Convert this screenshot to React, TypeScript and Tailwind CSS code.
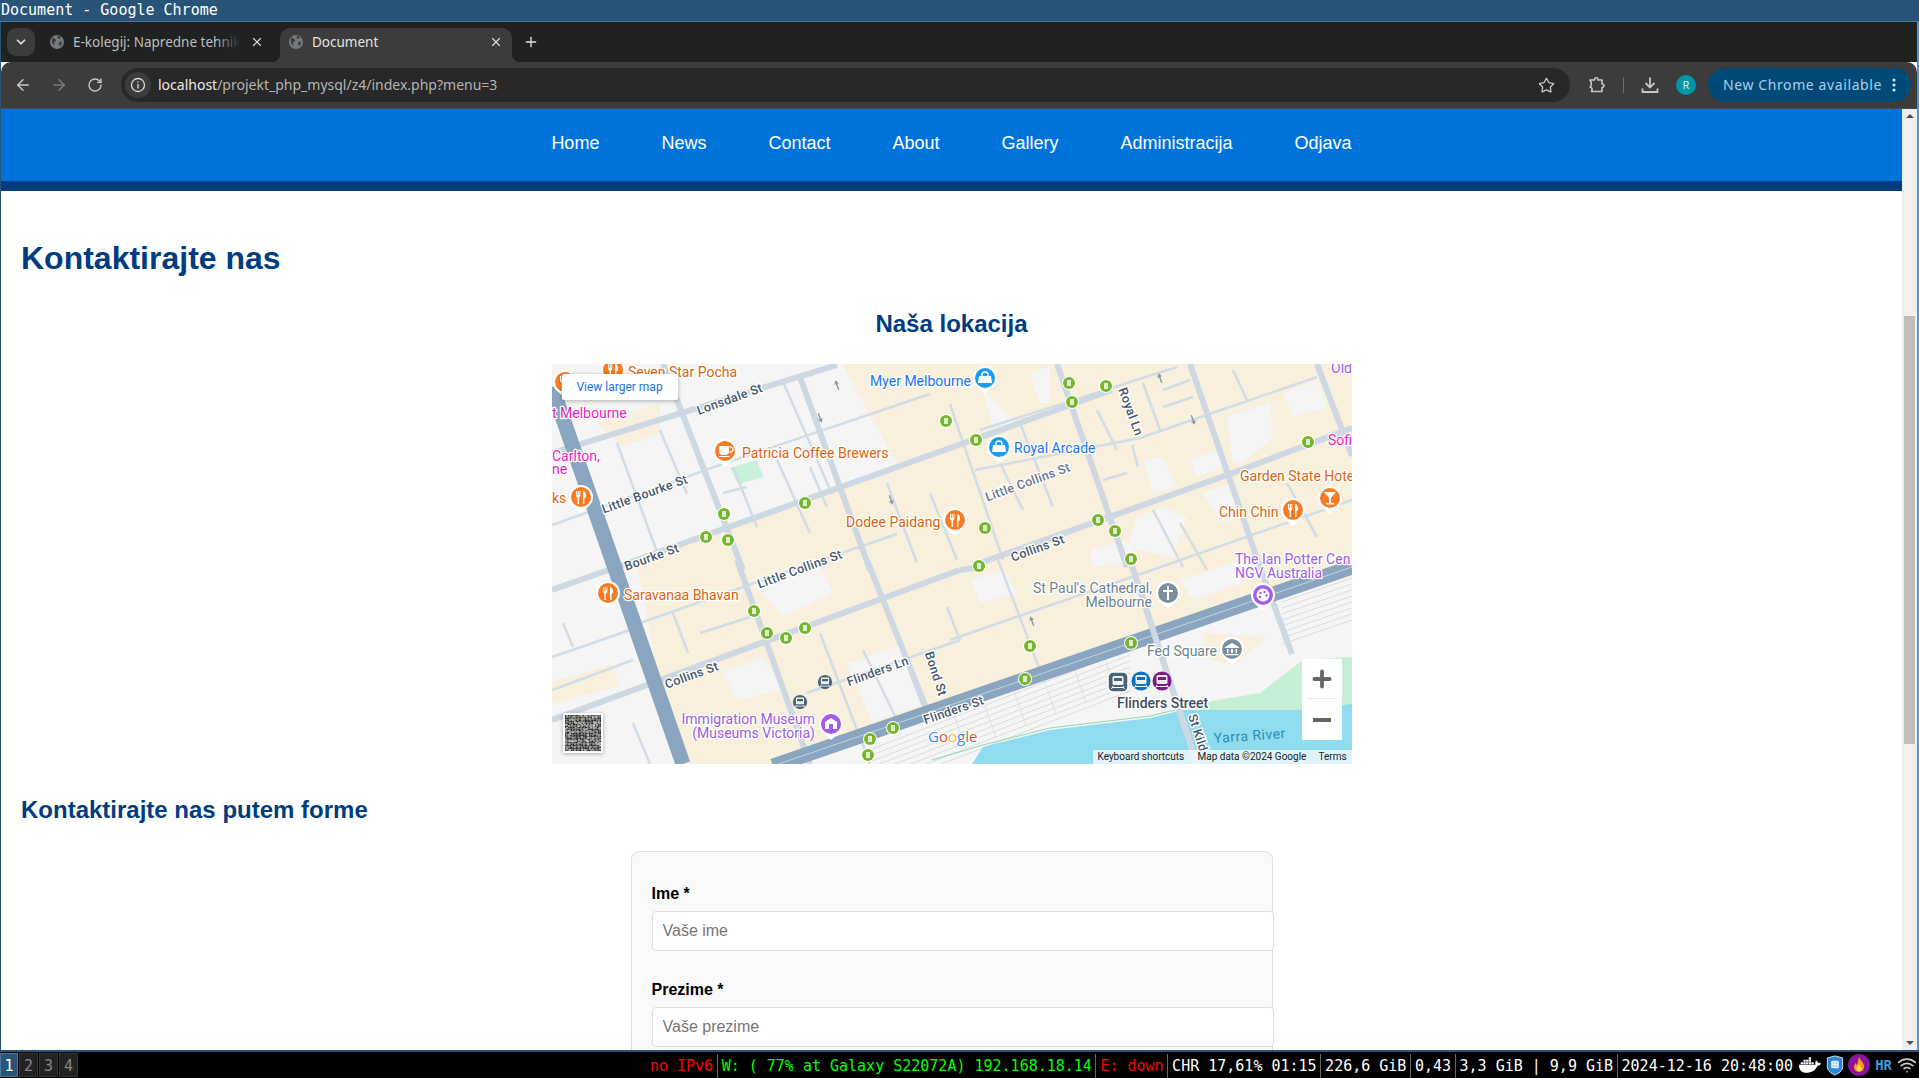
import React from "react";
import { ArrowLeft, ArrowRight, ChevronDown, Plus, RotateCw, Star, Wifi, X } from "lucide-react";
import { FaDocker } from "react-icons/fa";

const mono = "font-['DejaVu_Sans_Mono',monospace]";

const thinRoads = [
  [232, 20, 280, 130], [65, 79, 108, 196], [108, 66, 135, 130], [225, 96, 258, 169], [181, 103, 205, 163],
  [258, 103, 275, 143], [335, 119, 365, 199], [378, 129, 405, 196], [171, 129, 195, 123], [468, 59, 501, 143],
  [448, 99, 471, 146], [545, 46, 565, 86], [591, 19, 608, 66], [580, 81, 586, 103], [681, 6, 695, 36],
  [735, 119, 765, 173], [551, 116, 575, 109], [611, 26, 638, 16], [611, 43, 641, 33], [601, 146, 631, 203],
  [628, 159, 655, 206], [11, 259, 21, 283], [121, 249, 136, 289], [148, 269, 198, 253], [268, 269, 318, 400],
  [311, 286, 345, 356], [335, 246, 370, 340], [395, 243, 408, 276], [0, 293, 78, 266], [0, 326, 81, 296],
  [81, 359, 98, 400], [428, 66, 625, 3], [255, 329, 408, 276], [398, 276, 600, 206], [600, 206, 800, 136],
  [88, 259, 188, 224], [188, 224, 345, 170], [423, 106, 588, 74], [588, 74, 765, 13], [398, 40, 451, 196],
  [0, 161, 165, 102], [165, 102, 378, 30], [446, 196, 488, 306],
];

const wideRoads = [
  [0, 89, 285, 1], [0, 226, 65, 203], [65, 203, 401, 83], [401, 83, 560, 26], [0, 356, 408, 206],
  [408, 206, 431, 203], [431, 198, 678, 110], [678, 110, 800, 64], [111, 0, 191, 206], [185, 196, 258, 400],
  [248, 13, 318, 206], [315, 196, 375, 346], [505, 0, 575, 203], [578, 196, 645, 400], [638, 0, 708, 203],
  [708, 203, 740, 290], [765, 0, 800, 92],
];

const beige = [
  "290,0 800,0 800,200 700,240 640,262 560,290 470,320 400,340 225,400 130,400 115,360 85,200 215,150 345,100",
  "45,59 108,39 108,69 71,83", "0,318 60,300 68,322 0,340", "651,269 715,273 685,299 658,296",
];

const white = [
  "171,309 211,293 231,326 185,336", "198,216 265,196 281,229 231,253", "591,96 611,93 625,123 601,129",
  "638,96 665,86 671,103 645,113", "675,53 718,39 721,73 691,99 681,99", "731,29 765,16 775,43 741,53",
  "478,9 498,3 498,39 488,39", "431,26 465,59 441,63", "585,153 611,143 635,153 621,193 575,183",
  "651,129 681,119 691,153 668,159", "538,186 575,176 588,196 541,203", "418,216 451,206 465,229 428,239",
  "628,216 688,196 691,219 641,236", "295,300 350,280 372,340 320,358",
];

const stops = [
  [394, 57], [253, 139], [172, 150], [154, 173], [176, 176], [517, 19], [554, 22], [520, 38], [424, 76], [756, 78],
  [546, 156], [563, 167], [579, 195], [433, 164], [427, 202], [202, 247], [215, 269], [234, 274], [253, 264],
  [341, 364], [318, 375], [316, 391], [473, 315], [478, 282], [579, 279],
];

type PinKind = "food" | "cup" | "bag" | "cross" | "bank" | "palette" | "museum" | "drink";

const pins: [number, number, string, PinKind][] = [
  [61, 6, "#f57c24", "food"], [13, 18, "#f57c24", "food"], [29, 133, "#f57c24", "food"], [173, 87, "#f57c24", "cup"],
  [403, 156, "#f57c24", "food"], [56, 229, "#f57c24", "food"], [741, 146, "#f57c24", "food"], [778, 134, "#f57c24", "drink"],
  [433, 14, "#1a9cf0", "bag"], [447, 83, "#1a9cf0", "bag"], [616, 229, "#78909c", "cross"], [680, 285, "#78909c", "bank"],
  [711, 231, "#a45cf0", "palette"], [279, 360, "#a45cf0", "museum"],
];

function PinIcon({ kind }: { kind: PinKind }) {
  if (kind === "food") return <path d="M-5-6v4c0 1.500.8 2.200 1.500 2.500V7h1.400V.5C-1.400.2-.6-.5-.6-2v-4h-.9v4h-.7v-4h-.9v4h-.7v-4zM2-6c2 0 3 2 3 5 0 1.500-.7 2-1.600 2.200V7H2z" fill="#fff" />;
  if (kind === "cup") return <g><path d="M-6-5H4v5a4 4 0 0 1-4 4h-2a4 4 0 0 1-4-4z" fill="#fff" /><path d="M4-4h1.500a2 2 0 0 1 0 5H4" fill="none" stroke="#fff" strokeWidth="1.200" /><path d="M-6 5.500H5" stroke="#fff" strokeWidth="1" /></g>;
  if (kind === "bag") return <g><path d="M-6-2H6L7 5H-7z" fill="#fff" /><path d="M-3-2v-1a3 3 0 0 1 6 0v1" fill="none" stroke="#fff" strokeWidth="1.300" /></g>;
  if (kind === "cross") return <path d="M-1-7H1v4H5V-1H1V7H-1V-1H-5V-3H-1z" fill="#fff" />;
  if (kind === "bank") return <g fill="#fff"><path d="M0-6 7-2V-1H-7V-2z" /><path d="M-5 0h1.500v4H-5zM-1 0H1v4H-1zM3.500 0H5v4H3.500zM-6.500 5h13v1.200h-13z" /></g>;
  if (kind === "palette") return <g><circle r="6.500" fill="#fff" /><circle cx="-2.500" cy="-2" r="1.200" fill="#a45cf0" /><circle cx="1.500" cy="-3" r="1.200" fill="#a45cf0" /><circle cx="3.500" cy=".5" r="1.200" fill="#a45cf0" /><circle cx="-3" cy="2" r="1.200" fill="#a45cf0" /></g>;
  if (kind === "museum") return <g><path d="M-6-2 0-6 6-2V5H-6z" fill="#fff" /><path d="M-2 5V0H2V5z" fill="#a45cf0" /></g>;
  return <path d="M-6-6H6L1 0V5H4V6.500H-4V5H-1V0z" fill="#fff" />;
}

function Pin({ x, y, color, kind }: { x: number; y: number; color: string; kind: PinKind }) {
  return (
    <g transform={`translate(${x} ${y})`}>
      <path d="M-8.500 8.500A12 12 0 1 1 8.500 8.500L0 16z" fill="#fff" />
      <circle r="10" fill={color} />
      <PinIcon kind={kind} />
    </g>
  );
}

function Label({ x, y, color, children, anchor, weight, size = 14 }: { x: number; y: number; color: string; children: string; anchor?: "end" | "middle"; weight?: number; size?: number }) {
  return (
    <text x={x} y={y} fill={color} fontSize={size} fontWeight={weight} textAnchor={anchor} stroke="#fff" strokeWidth="2.500" paintOrder="stroke" strokeLinejoin="round">
      {children}
    </text>
  );
}

function Street({ x, y, rot, children, color = "#46566b" }: { x: number; y: number; rot: number; children: string; color?: string }) {
  return (
    <text transform={`translate(${x} ${y}) rotate(${rot})`} textAnchor="middle" dominantBaseline="middle" fill={color} fontSize="12.500" fontWeight={500} stroke="#fff" strokeWidth="2.500" paintOrder="stroke" letterSpacing=".3">
      {children}
    </text>
  );
}

function Transit({ x, y, bg, round, scale = 1 }: { x: number; y: number; bg: string; round?: boolean; scale?: number }) {
  return (
    <g transform={`translate(${x} ${y}) scale(${scale})`}>
      {round ? <circle r="9.500" fill={bg} /> : <rect x="-10" y="-10" width="20" height="20" rx="5" fill={bg} stroke="#fff" strokeWidth="1.500" />}
      <rect x="-5.500" y="-6" width="11" height="9" rx="1.500" fill="#fff" opacity=".9" />
      <rect x="-4" y="-4" width="8" height="3" fill={bg} />
      <path d="M-5 4-6.500 7M5 4 6.500 7M-6 5.500H6" stroke="#fff" strokeWidth="1" />
    </g>
  );
}

function MapArt() {
  return (
    <svg viewBox="0 0 800 400" width="800" height="400" className="block font-['Roboto',sans-serif]">
      <rect width="800" height="400" fill="#f5f5f5" />
      {beige.map((p) => <polygon key={p} points={p} fill="#f8f0dd" />)}
      {white.map((p) => <polygon key={p} points={p} fill="#f5f5f5" />)}
      {[0, 6, 12, 18, 24, 30, 36, 42].map((d) => (
        <g key={d} stroke="#d6d6d6" strokeWidth=".8">
          <line x1={320} y1={385 + d} x2={578} y2={285 + d} />
          <line x1={730} y1={238 + d} x2={800} y2={214 + d} />
        </g>
      ))}
      {[400, 430, 460, 490, 520, 550].map((x) => (
        <line key={x} x1={x} y1={345 - (x - 400) * 0.39} x2={x + 14} y2={385 - (x - 400) * 0.39} stroke="#dadada" strokeWidth=".7" />
      ))}
      <polygon points="178,104 204,96 212,113 186,120" fill="#c9f0da" />
      <polygon points="648,339 708,329 751,296 800,293 800,345 648,350" fill="#c5efd5" />
      <polygon points="420,400 431,383 498,366 598,354 631,346 748,346 800,340 800,400" fill="#8fdbef" />
      <path d="M380 396 431 381 498 364 598 352 631 344" fill="none" stroke="#8fd8b0" strokeWidth="1" />
      {thinRoads.map(([a, b, c, d]) => <line key={`${a}-${b}-${c}`} x1={a} y1={b} x2={c} y2={d} stroke="#d2dce6" strokeWidth="2.500" />)}
      {wideRoads.map(([a, b, c, d]) => <line key={`${a}-${b}-${c}`} x1={a} y1={b} x2={c} y2={d} stroke="#cdd8e3" strokeWidth="6" />)}
      <line x1="0" y1="23" x2="131" y2="400" stroke="#8aa5c0" strokeWidth="15" />
      <line x1="221" y1="402" x2="800" y2="203" stroke="#8aa5c0" strokeWidth="15" />
      <line x1="221" y1="402" x2="800" y2="203" stroke="#c6d2dd" strokeWidth="1" />
      <line x1="578" y1="196" x2="645" y2="400" stroke="#cdd8e3" strokeWidth="6" />
      {[[285, 21, 250], [268, 54, 70], [339, 136, 70], [608, 14, 250], [641, 56, 70], [480, 257, 250]].map(([x, y, r]) => (
        <path key={`${x}-${y}`} transform={`translate(${x} ${y}) rotate(${r})`} d="M-5-.7H1V-2.500L5 0 1 2.500V.7H-5z" fill="#8c98a4" />
      ))}

      <Label x={76} y={13} color="#d9650f">Seven Star Pocha</Label>
      <Label x={318} y={22} color="#1a73e8">Myer Melbourne</Label>
      <Label x={462} y={89} color="#1a73e8">Royal Arcade</Label>
      <Label x={0} y={54} color="#e91ec0">t Melbourne</Label>
      <Label x={0} y={97} color="#e91ec0">Carlton,</Label>
      <Label x={0} y={110} color="#e91ec0">ne</Label>
      <Label x={0} y={139} color="#d9650f">ks</Label>
      <Label x={190} y={94} color="#d9650f">Patricia Coffee Brewers</Label>
      <Label x={294} y={163} color="#d9650f">Dodee Paidang</Label>
      <Label x={72} y={236} color="#d9650f">Saravanaa Bhavan</Label>
      <Label x={688} y={117} color="#d9650f">Garden State Hote</Label>
      <Label x={667} y={153} color="#d9650f">Chin Chin</Label>
      <Label x={776} y={81} color="#e91ec0">Sofi</Label>
      <Label x={779} y={9} color="#9c5ee0">Old</Label>
      <Label x={683} y={200} color="#9c5ee0">The Ian Potter Cen</Label>
      <Label x={683} y={214} color="#9c5ee0">NGV Australia</Label>
      <Label x={600} y={229} color="#6d8291" anchor="end">St Paul's Cathedral,</Label>
      <Label x={600} y={243} color="#6d8291" anchor="end">Melbourne</Label>
      <Label x={595} y={292} color="#6d8291">Fed Square</Label>
      <Label x={565} y={344} color="#3f4c5c" weight={500}>Flinders Street</Label>
      <Label x={263} y={360} color="#9c5ee0" anchor="end">Immigration Museum</Label>
      <Label x={263} y={374} color="#9c5ee0" anchor="end">(Museums Victoria)</Label>
      <text transform="translate(662 379) rotate(-4)" fill="#2a8fb0" fontSize="14" letterSpacing=".5">Yarra River</text>

      <Street x={178} y={36} rot={-20}>Lonsdale St</Street>
      <Street x={93} y={131} rot={-20}>Little Bourke St</Street>
      <Street x={100} y={194} rot={-20}>Bourke St</Street>
      <Street x={476} y={119} rot={-20} color="#66758a">Little Collins St</Street>
      <Street x={248} y={206} rot={-20}>Little Collins St</Street>
      <Street x={486} y={185} rot={-20}>Collins St</Street>
      <Street x={140} y={312} rot={-20}>Collins St</Street>
      <Street x={326} y={308} rot={-20}>Flinders Ln</Street>
      <Street x={383} y={310} rot={72}>Bond St</Street>
      <Street x={402} y={347} rot={-19}>Flinders St</Street>
      <Street x={578} y={48} rot={70}>Royal Ln</Street>
      <Street x={645} y={369} rot={72}>St Kild</Street>

      {stops.map(([x, y]) => (
        <g key={`${x}-${y}`} transform={`translate(${x} ${y})`}>
          <circle r="7" fill="#fff" />
          <circle r="6" fill="#76b82a" />
          <rect x="-2.500" y="-3.500" width="5" height="7" rx="1" fill="#dff0c4" stroke="#5c9420" strokeWidth=".6" />
        </g>
      ))}
      {pins.map(([x, y, c, k]) => <Pin key={`${x}-${y}`} x={x} y={y} color={c} kind={k} />)}
      <Transit x={273} y={318} bg="#4a6178" round scale={0.75} />
      <Transit x={248} y={338} bg="#4a6178" round scale={0.75} />
      <Transit x={566} y={318} bg="#4a6178" />
      <Transit x={589} y={317} bg="#0b72c4" round />
      <Transit x={610} y={317} bg="#7d1a86" round />

      <text x="376" y="378" fontFamily="'Open Sans',sans-serif" fontSize="15" stroke="#fff" strokeWidth="2" paintOrder="stroke">
        <tspan fill="#4285f4">G</tspan><tspan fill="#ea4335">o</tspan><tspan fill="#fbbc05">o</tspan><tspan fill="#4285f4">g</tspan><tspan fill="#34a853">l</tspan><tspan fill="#ea4335">e</tspan>
      </text>
    </svg>
  );
}

function Satellite() {
  const cells = [];
  for (let y = 0; y < 24; y++) {
    for (let x = 0; x < 24; x++) {
      const n = Math.sin(x * 12.9898 + y * 78.233) * 43758.5453;
      const r = n - Math.floor(n);
      const v = Math.round(40 + r * r * 150);
      cells.push(<rect key={`${x}-${y}`} x={x * 1.5} y={y * 1.5} width="1.500" height="1.500" fill={`rgb(${v},${v + 4},${v - 4})`} />);
    }
  }
  return <svg viewBox="0 0 36 36" width="36" height="36" className="block">{cells}</svg>;
}

function Favicon() {
  return (
    <svg width="16" height="16" viewBox="0 0 16 16" className="shrink-0">
      <circle cx="8" cy="8" r="7" fill="#777a7c" />
      <path d="M3 3.500 6.500 5 7 7 5 8.500 5.500 12 3 9zM9 1.500 12 3 10.500 5 8.500 4zM10 8l3-.5-1 4.500-2-1z" fill="#3c3c3c" />
    </svg>
  );
}

function ChromeBar() {
  return (
    <div className="shrink-0 font-['Noto_Sans',sans-serif]">
      <div className="flex h-[40px] items-end bg-[#202221] pl-[6px]">
        <div className="mb-[6px] flex h-[28px] w-[28px] items-center justify-center rounded-[9px] bg-[#3c3c3c]">
          <ChevronDown size={14} strokeWidth={3} className="text-[#e3e3e3]" />
        </div>
        <div className="relative mb-[6px] ml-[2px] flex h-[28px] w-[243px] items-center pl-[12px] pr-[16px]">
          <Favicon />
          <span className="ml-[8px] mr-[6px] flex-1 overflow-hidden whitespace-nowrap text-[13.500px] text-[#bdbdbd]">E-kolegij: Napredne tehnike</span>
          <span className="absolute right-[40px] h-[20px] w-[24px] bg-gradient-to-r from-transparent to-[#202221]" />
          <X size={14} strokeWidth={2} className="ml-[4px] shrink-0 text-[#dedede]" />
        </div>
        <div className="relative flex h-[34px] w-[232px] items-center rounded-t-[10px] bg-[#3c3c3c] pb-[6px] pl-[8px] pr-[9px]">
          <span className="absolute -left-[8px] bottom-0 h-[8px] w-[8px] bg-[radial-gradient(circle_at_0_0,#202221_8px,#3c3c3c_8.500px)]" />
          <span className="absolute -right-[8px] bottom-0 h-[8px] w-[8px] bg-[radial-gradient(circle_at_100%_0,#202221_8px,#3c3c3c_8.500px)]" />
          <Favicon />
          <span className="ml-[8px] flex-1 whitespace-nowrap text-[13.500px] text-[#e3e3e3]">Document</span>
          <X size={14} strokeWidth={2} className="shrink-0 text-[#dedede]" />
        </div>
        <Plus size={16} strokeWidth={2} className="mb-[12px] ml-[11px] text-[#e3e3e3]" />
      </div>
      <div className="flex h-[47px] items-center rounded-t-[10px] border-b border-[#4a4a4a] bg-[#3c3c3c] pl-[13px] pr-[6px]">
        <ArrowLeft size={18} className="text-[#c7c7c7]" />
        <ArrowRight size={18} className="ml-[18px] text-[#7a7a7a]" />
        <RotateCw size={16} className="ml-[19px] text-[#c7c7c7]" />
        <div className="ml-[18px] flex h-[34px] w-[1449px] items-center rounded-full bg-[#282828] pl-[4px]">
          <div className="flex h-[26px] w-[26px] items-center justify-center rounded-full bg-[#3c3c3c]">
            <svg width="16" height="16" viewBox="0 0 16 16" fill="none" stroke="#d8d8d8" strokeWidth="1.300">
              <circle cx="8" cy="8" r="6.500" />
              <path d="M8 7v4.500M8 4.500v1.300" />
            </svg>
          </div>
          <span className="mb-[2px] ml-[7px] whitespace-nowrap text-[14px] text-[#b4b4b4]">
            <span className="text-[#eaeaea]">localhost</span>/projekt_php_mysql/z4/index.php?menu=3
          </span>
          <Star size={17} strokeWidth={1.800} className="ml-auto mr-[15px] text-[#c7c7c7]" />
        </div>
        <svg width="18" height="18" viewBox="0 0 18 18" fill="none" stroke="#c7c7c7" strokeWidth="1.600" className="ml-[18px]">
          <path d="M2 4h4.500c0-3 3.500-3 3.500 0H14v4c2.500-.5 2.500 3.500 0 3.500V15.500H3.500c1.500-2.500 0-4.500-1.500-4.500 1.500-1 2-4 0-7z" strokeLinejoin="round" />
        </svg>
        <div className="ml-[17px] h-[16px] w-[1px] bg-[#6e6e6e]" />
        <svg width="18" height="18" viewBox="0 0 18 18" fill="none" stroke="#c7c7c7" strokeWidth="1.800" className="ml-[17px]">
          <path d="M9 1.500v9.500M4.500 7 9 11.500 13.500 7M1.500 12.500v3.500h15v-3.500" />
        </svg>
        <div className="ml-[17px] flex h-[20px] w-[20px] items-center justify-center rounded-full bg-[#0097a7] text-[11px] text-[#d5f4f7]">R</div>
        <div className="ml-[12px] flex h-[34px] w-[203px] items-center rounded-full bg-[#004a77] pl-[15px] text-[14px] text-[#a6cfe8]">
          <span className="mb-[2px] tracking-[0.6px]">New Chrome available</span>
          <svg width="4" height="14" viewBox="0 0 4 14" fill="#c2e7ff" className="ml-[10px]">
            <circle cx="2" cy="2" r="1.600" />
            <circle cx="2" cy="7" r="1.600" />
            <circle cx="2" cy="12" r="1.600" />
          </svg>
        </div>
      </div>
    </div>
  );
}

function Field({ label, placeholder, last }: { label: string; placeholder: string; last?: boolean }) {
  return (
    <div className={last ? "" : "mb-[30px]"}>
      <label className="block text-[16px] font-bold leading-[18px] text-black">{label}</label>
      <input placeholder={placeholder} className="mt-[8px] block h-[40px] w-[622px] rounded-[4px] border border-[#ddd] bg-white px-[10px] text-[16px] placeholder:text-[#757575]" />
    </div>
  );
}

function Page() {
  const links = ["Home", "News", "Contact", "About", "Gallery", "Administracija", "Odjava"];
  return (
    <div className="min-w-0 flex-1 overflow-hidden bg-white font-['Liberation_Sans',sans-serif]">
      <nav className="flex h-[82px] items-start justify-center gap-[62px] border-b-[10px] border-[#003d80] bg-[#0073da] pt-[22px] text-[18px] leading-[25px] text-white">
        {links.map((l) => <a key={l}>{l}</a>)}
      </nav>
      <main className="px-[20px]">
        <h1 className="mt-[49px] text-[32px] font-bold leading-[37px] text-[#003d80]">Kontaktirajte nas</h1>
        <h2 className="mt-[33px] text-center text-[24px] font-bold leading-[28px] text-[#003d80]">Naša lokacija</h2>
        <div className="relative mx-auto mt-[26px] h-[400px] w-[800px] overflow-hidden font-['Roboto',sans-serif]">
          <MapArt />
          <div className="absolute left-[10px] top-[10px] flex h-[26px] w-[116px] items-center justify-center rounded-[2px] bg-white text-[12px] text-[#1a73e8] shadow-[0_1px_4px_rgba(0,0,0,0.3)]">View larger map</div>
          <div className="absolute left-[11px] top-[349px] border-2 border-white shadow-[0_1px_4px_rgba(0,0,0,0.3)]"><Satellite /></div>
          <div className="absolute left-[750px] top-[295px] flex h-[81px] w-[40px] flex-col items-center bg-white text-[#666]">
            <Plus size={26} strokeWidth={3.500} className="mt-[7px]" />
            <div className="mt-[6px] h-[1px] w-[30px] bg-[#e6e6e6]" />
            <div className="mt-[19px] h-[4px] w-[18px] bg-[#666]" />
          </div>
          <div className="absolute bottom-0 right-0 flex h-[14px] w-[259px] items-center whitespace-nowrap bg-white/70 text-[10px] leading-[14px] text-[#222]">
            <span className="w-[99px] pl-[5px]">Keyboard shortcuts</span>
            <span className="ml-[1px] w-[121px] pl-[5px]">Map data ©2024 Google</span>
            <span className="ml-[1px] pl-[4px]">Terms</span>
          </div>
        </div>
        <h3 className="mt-[32px] text-[24px] font-bold leading-[28px] text-[#003d80]">Kontaktirajte nas putem forme</h3>
        <form className="mx-auto mt-[27px] w-[642px] rounded-[8px] border border-[#ddd] bg-[#f9f9f9] p-[20px] pt-[33px]">
          <Field label="Ime *" placeholder="Vaše ime" />
          <Field label="Prezime *" placeholder="Vaše prezime" last />
        </form>
      </main>
    </div>
  );
}

function Scrollbar() {
  return (
    <div className="flex w-[15px] shrink-0 flex-col items-center bg-[#efefef]">
      <div className="mt-[5px] h-0 w-0 border-x-[4px] border-b-[4px] border-x-transparent border-b-[#505050]" />
      <div className="mt-[198px] h-[428px] w-[11px] bg-[#bdbdbd]" />
      <div className="mt-auto mb-[5px] h-0 w-0 border-x-[4px] border-t-[4px] border-x-transparent border-t-[#505050]" />
    </div>
  );
}

function StatusBar() {
  const segments: [string, string][] = [
    ["no IPv6", "text-[#ff0000]"],
    ["W: ( 77% at Galaxy S22072A) 192.168.18.14", "text-[#00ff00]"],
    ["E: down", "text-[#ff0000]"],
    ["CHR 17,61% 01:15", "text-white"],
    ["226,6 GiB", "text-white"],
    ["0,43", "text-white"],
    ["3,3 GiB | 9,9 GiB", "text-white"],
    ["2024-12-16 20:48:00", "text-white"],
  ];
  return (
    <div className={`flex h-[28px] shrink-0 items-center border-t-2 border-[#2a5578] bg-black ${mono} text-[15px] leading-[24px]`}>
      <div className="flex h-[24px] gap-[1px]">
        <div className="w-[18px] border border-[#4c7899] bg-[#285577] text-center text-white">1</div>
        {["2", "3", "4"].map((n) => <div key={n} className="w-[19px] border border-[#333] bg-[#222] text-center text-[#888]">{n}</div>)}
      </div>
      <div className="ml-auto flex items-center pt-[1px]">
        {segments.map(([t, c], i) => (
          <span key={t} className={`${c} whitespace-pre pl-[4px] ${i < segments.length - 1 ? "border-r border-[#666] pr-[3.500px]" : "pr-[4px]"}`}>{t}</span>
        ))}
      </div>
      <div className="ml-[2px] flex items-center gap-[4px] pr-[2px]">
        <FaDocker size={22} className="text-white" />
        <svg width="18" height="21" viewBox="0 0 18 22" className="ml-[1px]">
          <path d="M9 1 17 3v9c0 5-4 7-8 9-4-2-8-4-8-9V3z" fill="#2f86d6" stroke="#cfe4f7" strokeWidth="1" />
          <rect x="5" y="6" width="8" height="8" rx="1.500" fill="#dcecff" />
          <path d="M7 8h1v1H7zM10 8h1v1h-1zM7 11h1v1H7zM10 11h1v1h-1z" fill="#2f86d6" />
        </svg>
        <svg width="22" height="22" viewBox="0 0 22 22">
          <circle cx="11" cy="11" r="11" fill="#8a149a" />
          <path d="M11 3c1 3 5 5 5 10a5 5 0 0 1-10 0c0-2 1-3 2-4 0 2 1 2 1 2 1-3 1-5 2-8z" fill="#ff9a1f" />
          <path d="M11 10c.5 2 2.500 3 2.500 4.500a2.500 2.500 0 0 1-5 0c0-2 2-2.500 2.500-4.500z" fill="#ffdf3c" />
        </svg>
        <span className="ml-[1px] text-[14px] font-bold text-[#3f9bdc]">HR</span>
        <Wifi size={20} strokeWidth={2} className="ml-[1px] text-[#cccccc]" />
      </div>
    </div>
  );
}

export default function App() {
  return (
    <div className="flex h-screen w-full flex-col overflow-hidden bg-white">
      <div className={`h-[22px] shrink-0 border-b border-[#4c7899] bg-[#285577] text-[15px] leading-[21px] text-white ${mono} pl-[1px]`}>Document - Google Chrome</div>
      <div className="flex min-h-0 flex-1 flex-col border-l border-r-2 border-l-[#285577] border-r-[#3a9bf0]">
        <ChromeBar />
        <div className="flex min-h-0 flex-1">
          <Page />
          <Scrollbar />
        </div>
      </div>
      <StatusBar />
    </div>
  );
}
